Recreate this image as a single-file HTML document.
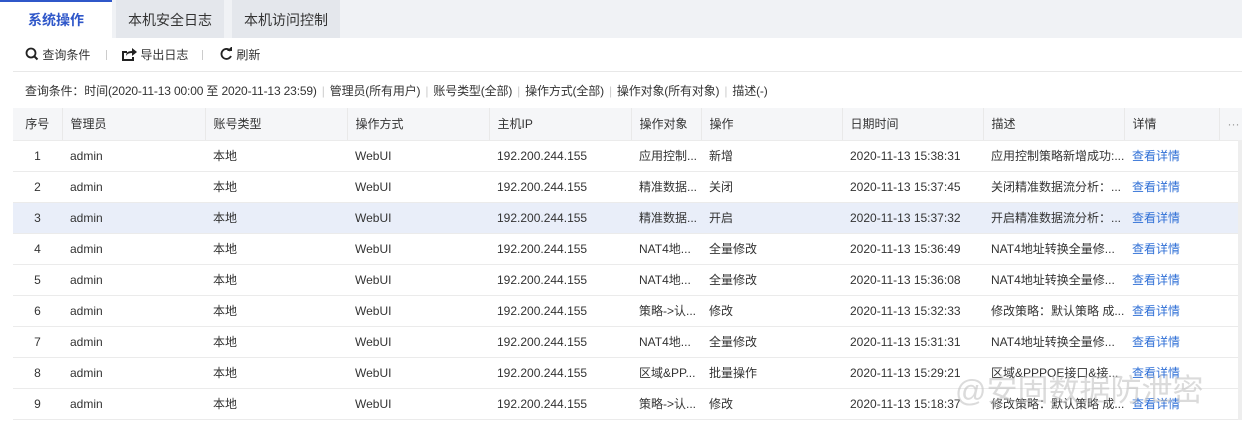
<!DOCTYPE html>
<html><head><meta charset="utf-8"><style>
*{margin:0;padding:0;box-sizing:border-box}
body{width:1242px;height:431px;overflow:hidden;background:#fff;font-family:"Liberation Sans","Noto Sans CJK SC",sans-serif;font-size:12px;color:#333;position:relative}
.tabs{position:absolute;left:0;top:0;width:1242px;height:38px;background:#f0f2f5}
.tab{position:absolute;top:0;height:38px;line-height:40px;text-align:center;font-size:14px;color:#333;background:#e4e7ec}
.tab.on{background:#fff;color:#2f57c9;font-weight:bold;border-top:2px solid #2f57c9;line-height:36px}
.tb{position:absolute;top:45px;height:20px;line-height:20px;font-size:12px;color:#333}
.sep{position:absolute;top:50px;width:1px;height:10px;background:#ccc}
.hr{position:absolute;left:13px;right:0;height:1px;background:#e8e8e8}
.cond{position:absolute;left:25px;top:82px;font-size:12px;color:#333;white-space:nowrap;letter-spacing:-0.15px}
.cond i{font-style:normal;color:#ccc;margin:0 5px}
table{position:absolute;left:13px;top:108px;border-collapse:collapse;table-layout:fixed;width:1229px}
td,th{height:31px;font-weight:normal;text-align:left;padding-left:8px;white-space:nowrap;overflow:hidden;border-bottom:1px solid #ebebeb;font-size:12px}
th{height:32px;background:#f5f6f8;border-right:1px solid #e9e9e9;color:#333}
td:first-child,th:first-child{text-align:center;padding-left:0}
tr.hl td{background:#e9eef9}
a{color:#2f6fd6;text-decoration:none}
.wm{position:absolute;left:955px;top:365px;font-size:31px;color:rgba(190,190,190,.55);white-space:nowrap}
.sb{position:absolute;left:1238px;top:140px;width:4px;height:280px;background:#eee}
</style></head><body>
<div class="tabs">
<div class="tab on" style="left:0;width:112px">系统操作</div>
<div class="tab" style="left:116px;width:108px">本机安全日志</div>
<div class="tab" style="left:232px;width:108px">本机访问控制</div>
</div>
<div class="tb" style="left:25px"><svg width="14" height="14" viewBox="0 0 14 14" style="vertical-align:-2px"><circle cx="6" cy="6" r="4.5" fill="none" stroke="#222" stroke-width="1.8"/><path d="M9 9l3.5 3.5" stroke="#222" stroke-width="2"/></svg> 查询条件</div>
<div class="sep" style="left:106px"></div>
<div class="tb" style="left:121px"><svg width="16" height="14" viewBox="0 0 16 14" style="vertical-align:-2px"><path d="M1 4h5v2H3v6h8v-2h2v4H1z" fill="#222"/><path d="M5 9c0-4 3-5 6-5V1l5 4-5 4V6c-3 0-5 1-6 3z" fill="#222"/></svg> 导出日志</div>
<div class="sep" style="left:202px"></div>
<div class="tb" style="left:219px"><svg width="14" height="14" viewBox="0 0 14 14" style="vertical-align:-2px"><path d="M11.5 4A5 5 0 1 0 12 9" fill="none" stroke="#222" stroke-width="1.8"/><path d="M8 4h5V-1z" fill="#222"/></svg> 刷新</div>
<div class="hr" style="top:71px"></div>
<div class="cond">查询条件：时间(2020-11-13 00:00 至 2020-11-13 23:59)<i>|</i>管理员(所有用户)<i>|</i>账号类型(全部)<i>|</i>操作方式(全部)<i>|</i>操作对象(所有对象)<i>|</i>描述(-)</div>
<table>
<colgroup><col style="width:49px"><col style="width:143px"><col style="width:142px"><col style="width:142px"><col style="width:142px"><col style="width:70px"><col style="width:141px"><col style="width:141px"><col style="width:141px"><col style="width:95px"><col style="width:23px"></colgroup>
<tr><th>序号</th><th>管理员</th><th>账号类型</th><th>操作方式</th><th>主机IP</th><th>操作对象</th><th>操作</th><th>日期时间</th><th>描述</th><th>详情</th><th style="color:#999;border-right:0">···</th></tr>
<tr><td>1</td><td>admin</td><td>本地</td><td>WebUI</td><td>192.200.244.155</td><td>应用控制...</td><td>新增</td><td>2020-11-13 15:38:31</td><td>应用控制策略新增成功:...</td><td><a>查看详情</a></td><td></td></tr>
<tr><td>2</td><td>admin</td><td>本地</td><td>WebUI</td><td>192.200.244.155</td><td>精准数据...</td><td>关闭</td><td>2020-11-13 15:37:45</td><td>关闭精准数据流分析：...</td><td><a>查看详情</a></td><td></td></tr>
<tr class="hl"><td>3</td><td>admin</td><td>本地</td><td>WebUI</td><td>192.200.244.155</td><td>精准数据...</td><td>开启</td><td>2020-11-13 15:37:32</td><td>开启精准数据流分析：...</td><td><a>查看详情</a></td><td></td></tr>
<tr><td>4</td><td>admin</td><td>本地</td><td>WebUI</td><td>192.200.244.155</td><td>NAT4地...</td><td>全量修改</td><td>2020-11-13 15:36:49</td><td>NAT4地址转换全量修...</td><td><a>查看详情</a></td><td></td></tr>
<tr><td>5</td><td>admin</td><td>本地</td><td>WebUI</td><td>192.200.244.155</td><td>NAT4地...</td><td>全量修改</td><td>2020-11-13 15:36:08</td><td>NAT4地址转换全量修...</td><td><a>查看详情</a></td><td></td></tr>
<tr><td>6</td><td>admin</td><td>本地</td><td>WebUI</td><td>192.200.244.155</td><td>策略-&gt;认...</td><td>修改</td><td>2020-11-13 15:32:33</td><td>修改策略：默认策略 成...</td><td><a>查看详情</a></td><td></td></tr>
<tr><td>7</td><td>admin</td><td>本地</td><td>WebUI</td><td>192.200.244.155</td><td>NAT4地...</td><td>全量修改</td><td>2020-11-13 15:31:31</td><td>NAT4地址转换全量修...</td><td><a>查看详情</a></td><td></td></tr>
<tr><td>8</td><td>admin</td><td>本地</td><td>WebUI</td><td>192.200.244.155</td><td>区域&amp;PP...</td><td>批量操作</td><td>2020-11-13 15:29:21</td><td>区域&amp;PPPOE接口&amp;接...</td><td><a>查看详情</a></td><td></td></tr>
<tr><td>9</td><td>admin</td><td>本地</td><td>WebUI</td><td>192.200.244.155</td><td>策略-&gt;认...</td><td>修改</td><td>2020-11-13 15:18:37</td><td>修改策略：默认策略 成...</td><td><a>查看详情</a></td><td></td></tr>
</table>
<div class="sb"></div>
<div class="wm">@安固数据防泄密</div>
</body></html>
